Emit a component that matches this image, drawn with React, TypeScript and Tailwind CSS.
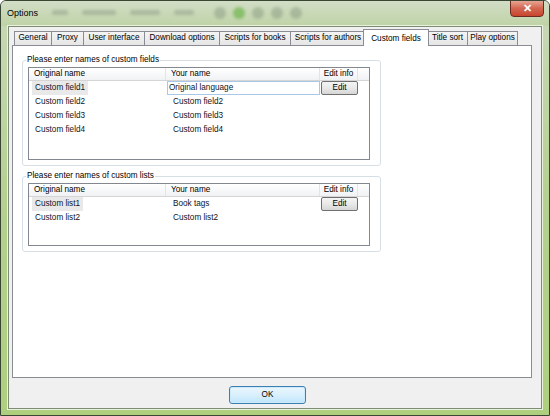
import React from 'react';

const tabs = [
  { label: 'General', w: 37 },
  { label: 'Proxy', w: 32 },
  { label: 'User interface', w: 61 },
  { label: 'Download options', w: 75 },
  { label: 'Scripts for books', w: 71 },
  { label: 'Scripts for authors', w: 75 },
  { label: 'Custom fields', w: 62, active: true },
  { label: 'Title sort', w: 40 },
  { label: 'Play options', w: 51 },
];

function EditButton() {
  return (
    <div className="w-[37px] h-[14px] ml-[1px] flex items-center justify-center rounded-[2px] border border-[#707070] bg-gradient-to-b from-[#f4f4f4] via-[#e9e9e9] to-[#d6d6d6] text-black">
      Edit
    </div>
  );
}

interface Row {
  original: string;
  yours: string;
  editing?: boolean;
  button?: boolean;
  selected?: boolean;
}

function ListView({ rows, height }: { rows: Row[]; height: number }) {
  return (
    <div className="w-[342px] border border-[#828790] bg-white" style={{ height }}>
      <div className="flex h-[13px] border-b border-[#d5d5d5] bg-gradient-to-b from-white to-[#f1f2f4] text-black leading-[12px]">
        <div className="w-[137px] pl-[5px] border-r border-[#e3e4e6]">Original name</div>
        <div className="w-[154px] pl-[5px] border-r border-[#e3e4e6]">Your name</div>
        <div className="w-[38px] text-center border-r border-[#e3e4e6]">Edit info</div>
        <div className="flex-1" />
      </div>
      {rows.map((r) => (
        <div key={r.original} className="flex h-[14px] items-center text-[#10131c]">
          <div className="w-[137px] h-full flex items-center">
            <span className={`ml-[3px] px-[3px] h-full flex items-center ${r.selected ? 'bg-[#e9e9e9]' : ''}`}>
              {r.original}
            </span>
          </div>
          <div className="w-[154px] h-full flex items-center">
            {r.editing ? (
              <div className="ml-[1px] w-[153px] h-[14px] border border-[#a9c8e8] bg-white pl-[1px] flex items-center">
                {r.yours}
              </div>
            ) : (
              <span className="pl-[7px]">{r.yours}</span>
            )}
          </div>
          <div className="w-[38px] h-full flex items-center">{r.button && <EditButton />}</div>
        </div>
      ))}
    </div>
  );
}

function Group({ title, rows, height }: { title: string; rows: Row[]; height: number }) {
  return (
    <fieldset className="w-[359px] border border-[#d5dfe5] rounded-[3px] pl-[5px] pb-[5px] pt-[2px] ml-[9px]">
      <legend className="ml-[-2px] px-[1px] leading-[10px] text-black">{title}</legend>
      <ListView rows={rows} height={height} />
    </fieldset>
  );
}

export default function App() {
  return (
    <div
      className="w-[550px] h-[416px] flex flex-col border border-[#394634] rounded-t-[6px] overflow-hidden bg-gradient-to-b from-[#c9d8b8] via-[#b5d08f] to-[#aed07e] text-[8.2px]"
      style={{ fontFamily: '"Liberation Sans", Arial, sans-serif' }}
    >
      {/* title bar */}
      <div className="h-[25px] flex items-start shrink-0 bg-gradient-to-b from-[#d2ddc6] to-[#bfd3a6]">
        <span className="ml-[6px] mt-[6px] text-[9px] text-black">Options</span>
        <div className="flex items-center gap-[14px] ml-[14px] mt-[9px] blur-[1.5px] opacity-50">
          <div className="w-[16px] h-[5px] rounded bg-[#8d9c86]" />
          <div className="w-[34px] h-[5px] rounded bg-[#8d9c86]" />
          <div className="w-[30px] h-[5px] rounded bg-[#8d9c86]" />
          <div className="w-[20px] h-[5px] rounded bg-[#8d9c86]" />
        </div>
        <div className="flex items-center gap-[7px] ml-[20px] mt-[6px] blur-[1.5px] opacity-60">
          <div className="w-[12px] h-[12px] rounded-full bg-[#93a58a]" />
          <div className="w-[12px] h-[12px] rounded-full bg-[#5fae3c]" />
          <div className="w-[12px] h-[12px] rounded-full bg-[#93a58a]" />
          <div className="w-[12px] h-[12px] rounded-full bg-[#93a58a]" />
          <div className="w-[12px] h-[12px] rounded-full bg-[#93a58a]" />
        </div>
        <div className="flex-1" />
        <div className="mr-[5px] -mt-px w-[34px] h-[17px] rounded-b-[4px] border border-[#6e2a20] bg-gradient-to-b from-[#e7a493] via-[#d26550] to-[#c8452d] flex items-center justify-center text-white text-[11px] font-bold leading-none">
          ✕
        </div>
      </div>

      {/* client */}
      <div className="flex-1 mx-[7px] mb-[6px] border border-[#7d8c74] bg-[#f0f0f0] pl-[3px] pt-[2px] shadow-[0_0_0_1px_#e9f1df]">
        <div className="flex items-end h-[16px] ml-[2px]">
          {tabs.map((t) =>
            t.active ? (
              <div
                key={t.label}
                className="relative z-10 -mx-[2px] mb-[-1px] h-[17px] flex items-start justify-center pt-[3px] border border-b-0 border-[#898c95] bg-white text-black"
                style={{ width: t.w + 4 }}
              >
                {t.label}
              </div>
            ) : (
              <div
                key={t.label}
                className="h-[14px] flex items-center justify-center border-t border-l border-[#898c95] last:border-r bg-gradient-to-b from-[#f4f4f4] to-[#e6e6e6] text-black"
                style={{ width: t.w }}
              >
                {t.label}
              </div>
            )
          )}
        </div>
        <div className="w-[520px] h-[333px] border border-[#898c95] bg-white pt-[9px] flex flex-col gap-[5px]">
          <Group
            title="Please enter names of custom fields"
            height={93}
            rows={[
              { original: 'Custom field1', yours: 'Original language', editing: true, button: true, selected: true },
              { original: 'Custom field2', yours: 'Custom field2' },
              { original: 'Custom field3', yours: 'Custom field3' },
              { original: 'Custom field4', yours: 'Custom field4' },
            ]}
          />
          <Group
            title="Please enter names of custom lists"
            height={63}
            rows={[
              { original: 'Custom list1', yours: 'Book tags', button: true, selected: true },
              { original: 'Custom list2', yours: 'Custom list2' },
            ]}
          />
        </div>
        <div className="ml-[217px] mt-[8px] w-[77px] h-[18px] rounded-[3px] border border-[#3c7fb1] bg-gradient-to-b from-[#eaf6fd] via-[#d9f0fc] to-[#bee6fd] flex items-center justify-center text-black shadow-[inset_0_0_0_1px_#cdeafc]">
          OK
        </div>
      </div>
    </div>
  );
}
